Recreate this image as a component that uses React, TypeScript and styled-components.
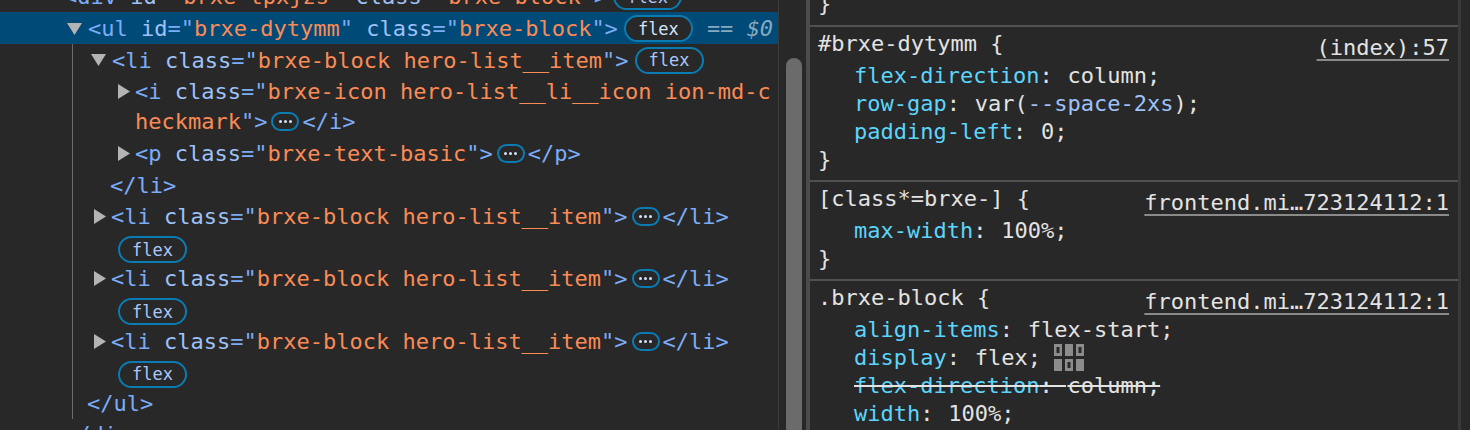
import React from 'react';
import styled, { createGlobalStyle } from 'styled-components';

const Global = createGlobalStyle`
  html, body { margin: 0; padding: 0; background: #282828; }
  body { width: 1470px; height: 430px; overflow: hidden; }
`;

const mono = `"DejaVu Sans Mono", "Liberation Mono", monospace`;

const Shell = styled.div`
  display: flex;
  width: 1470px;
  height: 430px;
  overflow: hidden;
  background: #282828;
  font-family: ${mono};
  font-size: 22px;
  color: #e3e3e3;
`;

const Elements = styled.div`
  position: relative;
  flex: none;
  width: 778px;
  height: 430px;
  overflow: hidden;
`;

const Tree = styled.div`
  display: flex;
  flex-direction: column;
  margin-top: -19.2px;
`;

/* $shift moves the row's content up or down from its centre line */
const Row = styled.div<{ $x: number; $selected?: boolean; $shift?: number }>`
  flex: none;
  box-sizing: border-box;
  display: flex;
  align-items: center;
  height: ${p => (p.$selected ? 32.4 : 31.2)}px;
  padding-left: ${p => p.$x}px;
  padding-top: ${p => Math.max(0, 2 * (p.$shift ?? 0.5))}px;
  padding-bottom: ${p => Math.max(0, -2 * (p.$shift ?? 0.5))}px;
  white-space: pre;
  background: ${p => (p.$selected ? '#004a77' : 'transparent')};
`;

const Guide = styled.div`
  position: absolute;
  left: 72px;
  top: 44px;
  width: 1px;
  height: 375px;
  background: #6c6c6c;
`;

const Tag = styled.span`color: #7cacf8;`;
const Attr = styled.span`color: #9ec2f8;`;
const Val = styled.span`color: #fb8b55;`;

const ArrowSlot = styled.span`
  flex: none;
  width: 24px;
  display: flex;
  align-items: center;
`;

const OpenArrow = styled.svg`
  margin-left: 3px;
`;

const ClosedArrow = styled.svg`
  margin-left: 7px;
`;

const FlexBadge = styled.span<{ $selected?: boolean }>`
  flex: none;
  box-sizing: border-box;
  width: 69px;
  height: 27px;
  margin-left: 6px;
  border: 2px solid #0a7cb4;
  border-radius: 14px;
  display: flex;
  align-items: center;
  justify-content: center;
  font-size: 17px;
  color: ${p => (p.$selected ? '#d4e4f8' : '#a8c7fa')};
  background: ${p => (p.$selected ? '#282828' : 'transparent')};
`;

const WrappedBadge = styled(FlexBadge)`
  margin-left: 7px;
`;

const DotsBadge = styled.span`
  flex: none;
  box-sizing: border-box;
  width: 28px;
  height: 19px;
  margin: 0 3px 0 4px;
  border: 2px solid #0a7cb4;
  border-radius: 10px;
  display: flex;
  align-items: center;
  justify-content: center;
  gap: 2px;
`;

const Dot = styled.i`
  width: 3px;
  height: 3px;
  border-radius: 50%;
  background: #d4e4f8;
`;

const Reference = styled.span`
  margin-left: 14px;
  color: #86a9c1;
`;

const RefVar = styled.em`
  font-style: italic;
`;

const Gutter = styled.div`
  flex: none;
  width: 28px;
  height: 430px;
  background: #282828;
  border-left: 1px solid #3a3a3a;
  box-sizing: border-box;
  padding: 58px 0 0 7px;
`;

const Thumb = styled.div`
  width: 16px;
  height: 372px;
  border-radius: 8px 8px 0 0;
  background: #6b6b6b;
`;

const Sidebar = styled.div`
  flex: none;
  box-sizing: border-box;
  width: 655px;
  height: 430px;
  border-left: 4px solid #4b4b4b;
  border-right: 3px solid #3a3a3a;
  overflow: hidden;
`;

const Rule = styled.section<{ $h: number; $last?: boolean }>`
  box-sizing: border-box;
  height: ${p => p.$h}px;
  border-bottom: ${p => (p.$last ? '0' : '2px solid #515151')};
  padding-left: 8px;
  padding-right: 9px;
  overflow: hidden;
`;

const SelectorRow = styled.div`
  display: flex;
  justify-content: space-between;
  height: 34px;
  align-items: center;
  white-space: pre;
`;

const Selector = styled.span`
  position: relative;
  top: -1px;
`;

const Source = styled.span`
  text-decoration: underline;
  text-decoration-thickness: 2px;
  text-underline-offset: 4px;
  text-decoration-color: #8a8a8a;
  position: relative;
  top: 3px;
`;

const Decl = styled.div`
  display: flex;
  align-items: center;
  height: 28px;
  padding-left: 36px;
  white-space: pre;
`;

const Closer = styled.div`
  height: 28px;
  display: flex;
  align-items: center;
`;

const TopCloser = styled(Closer)`
  margin-top: -11px;
`;

const Prop = styled.span`color: #5cd5fb;`;
const VarName = styled.span`color: #9ec2f8;`;

const Colon = styled.span`
  margin-right: 1.5px;
`;

const Struck = styled.span`
  text-decoration: line-through;
  text-decoration-thickness: 2px;
  text-decoration-color: #e3e3e3;
`;

const FlexIconWrap = styled.span`
  display: inline-flex;
  margin-left: 13px;
`;

const Triangle = ({ open }: { open?: boolean }) =>
  open ? (
    <OpenArrow width="15" height="12" viewBox="0 0 15 12"><path d="M0 0h15L7.500 12z" fill="#b4b4b4" /></OpenArrow>
  ) : (
    <ClosedArrow width="12" height="15" viewBox="0 0 12 15"><path d="M0 0l12 7.500L0 15z" fill="#b4b4b4" /></ClosedArrow>
  );

const Dots = () => (
  <DotsBadge>
    <Dot /><Dot /><Dot />
  </DotsBadge>
);

const ListItem = () => (
  <>
    <Row $x={87}>
      <ArrowSlot><Triangle /></ArrowSlot>
      <Tag>&lt;li </Tag><Attr>class</Attr><Tag>=&quot;</Tag><Val>brxe-block hero-list__item</Val><Tag>&quot;&gt;</Tag>
      <Dots />
      <Tag>&lt;/li&gt;</Tag>
    </Row>
    <Row $x={111} $shift={2.5}>
      <WrappedBadge>flex</WrappedBadge>
    </Row>
  </>
);

const FlexIcon = () => (
  <FlexIconWrap>
    <svg width="30" height="27" viewBox="0 0 30 27">
      <g fill="#8c8c8c">
        <path fillRule="evenodd" d="M0 0h8v12H0zM2.500 3v6h3V3z" />
        <rect x="11" y="0" width="8" height="12" />
        <path fillRule="evenodd" d="M22 0h8v12h-8zM24.500 3v6h3V3z" />
        <rect x="0" y="15" width="8" height="12" />
        <path fillRule="evenodd" d="M11 15h8v12h-8zM13.500 18v6h3v-6z" />
        <rect x="22" y="15" width="8" height="12" />
      </g>
    </svg>
  </FlexIconWrap>
);

export default function App() {
  return (
    <Shell>
      <Global />
      <Elements>
        <Tree>
          <Row $x={64}>
            <Tag>&lt;div </Tag><Attr>id</Attr><Tag>=&quot;</Tag><Val>brxe-tpxjzs</Val><Tag>&quot; </Tag><Attr>class</Attr><Tag>=&quot;</Tag><Val>brxe-block</Val><Tag>&quot;&gt;</Tag>
            <FlexBadge>flex</FlexBadge>
          </Row>
          <Row $x={64} $selected $shift={0.75}>
            <ArrowSlot><Triangle open /></ArrowSlot>
            <Tag>&lt;ul </Tag><Attr>id</Attr><Tag>=&quot;</Tag><Val>brxe-dytymm</Val><Tag>&quot; </Tag><Attr>class</Attr><Tag>=&quot;</Tag><Val>brxe-block</Val><Tag>&quot;&gt;</Tag>
            <FlexBadge $selected>flex</FlexBadge>
            <Reference>== <RefVar>$0</RefVar></Reference>
          </Row>
          <Row $x={88}>
            <ArrowSlot><Triangle open /></ArrowSlot>
            <Tag>&lt;li </Tag><Attr>class</Attr><Tag>=&quot;</Tag><Val>brxe-block hero-list__item</Val><Tag>&quot;&gt;</Tag>
            <FlexBadge>flex</FlexBadge>
          </Row>
          <Row $x={111}>
            <ArrowSlot><Triangle /></ArrowSlot>
            <Tag>&lt;i </Tag><Attr>class</Attr><Tag>=&quot;</Tag><Val>brxe-icon hero-list__li__icon ion-md-c</Val>
          </Row>
          <Row $x={135} $shift={-0.5}>
            <Val>heckmark</Val><Tag>&quot;&gt;</Tag><Dots /><Tag>&lt;/i&gt;</Tag>
          </Row>
          <Row $x={111} $shift={-0.5}>
            <ArrowSlot><Triangle /></ArrowSlot>
            <Tag>&lt;p </Tag><Attr>class</Attr><Tag>=&quot;</Tag><Val>brxe-text-basic</Val><Tag>&quot;&gt;</Tag><Dots /><Tag>&lt;/p&gt;</Tag>
          </Row>
          <Row $x={110}><Tag>&lt;/li&gt;</Tag></Row>
          <ListItem />
          <ListItem />
          <ListItem />
          <Row $x={87}><Tag>&lt;/ul&gt;</Tag></Row>
          <Row $x={64}><Tag>&lt;/div&gt;</Tag></Row>
        </Tree>
        <Guide />
      </Elements>
      <Gutter><Thumb /></Gutter>
      <Sidebar>
        <Rule $h={27}>
          <TopCloser>{'}'}</TopCloser>
        </Rule>
        <Rule $h={155}>
          <SelectorRow>
            <Selector>#brxe-dytymm {'{'}</Selector>
            <Source>(index):57</Source>
          </SelectorRow>
          <Decl><Prop>flex-direction</Prop><Colon>: </Colon>column;</Decl>
          <Decl><Prop>row-gap</Prop><Colon>: </Colon>var(<VarName>--space-2xs</VarName>);</Decl>
          <Decl><Prop>padding-left</Prop><Colon>: </Colon>0;</Decl>
          <Closer>{'}'}</Closer>
        </Rule>
        <Rule $h={99}>
          <SelectorRow>
            <Selector>[class*=brxe-] {'{'}</Selector>
            <Source>frontend.mi…723124112:1</Source>
          </SelectorRow>
          <Decl><Prop>max-width</Prop><Colon>: </Colon>100%;</Decl>
          <Closer>{'}'}</Closer>
        </Rule>
        <Rule $h={150} $last>
          <SelectorRow>
            <Selector>.brxe-block {'{'}</Selector>
            <Source>frontend.mi…723124112:1</Source>
          </SelectorRow>
          <Decl><Prop>align-items</Prop><Colon>: </Colon>flex-start;</Decl>
          <Decl><Prop>display</Prop><Colon>: </Colon>flex;<FlexIcon /></Decl>
          <Decl><Struck><Prop>flex-direction</Prop><Colon>: </Colon>column;</Struck></Decl>
          <Decl><Prop>width</Prop><Colon>: </Colon>100%;</Decl>
        </Rule>
      </Sidebar>
    </Shell>
  );
}
